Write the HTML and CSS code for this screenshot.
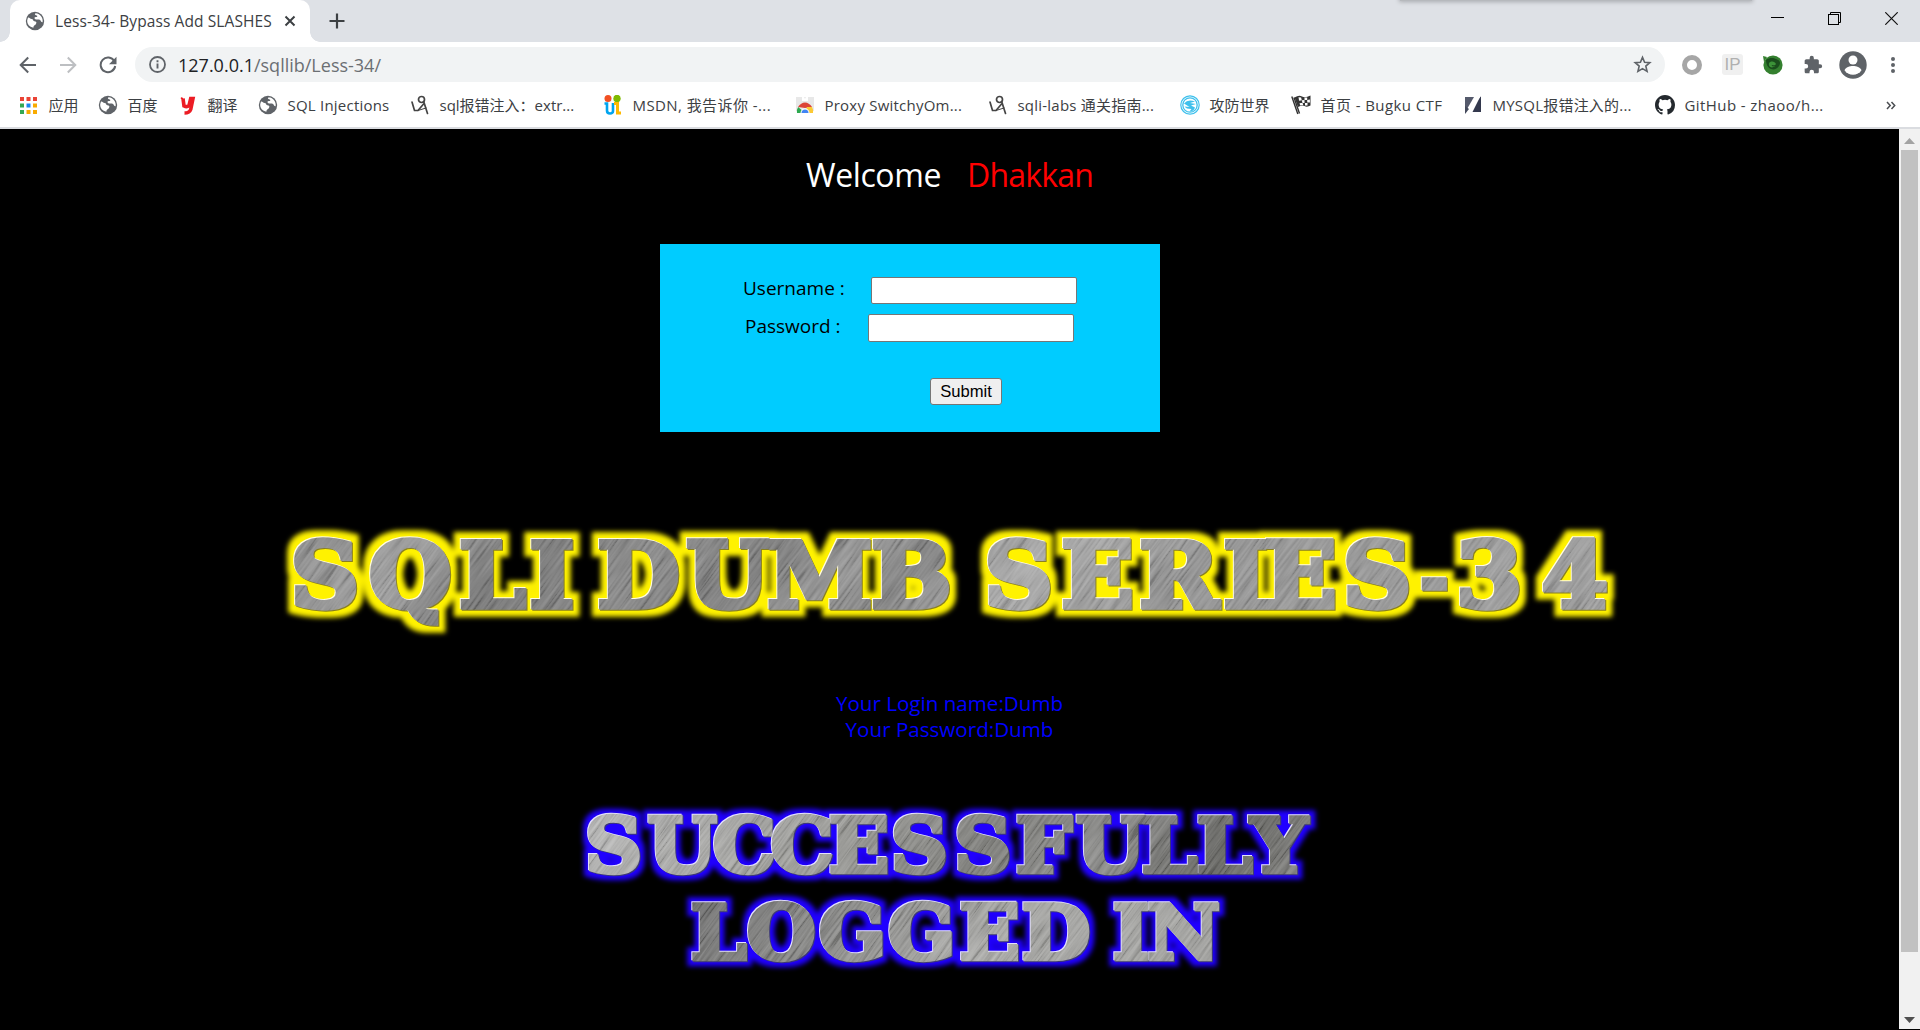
FILE: index.html
```
<!DOCTYPE html>
<html lang="zh-CN">
<head>
<meta charset="utf-8">
<title>Less-34- Bypass Add SLASHES</title>
<link rel="stylesheet" href="styles.css">
</head>
<body>
<svg class="defs" width="0" height="0" aria-hidden="true">
  <defs>
    <symbol id="globe" viewBox="0 0 20 20"><circle cx="10" cy="10" r="9.2" fill="#5f6368"/><path d="M3 6.500c1.800-.2 2 1.600 3.700 1.500 1.700 0 1 2 2.600 2.300 1.800.3 2.700 1 1.700 2.700-.8 1.300-2.500 1.200-2.600 3.700C4.500 16.300 1.900 13 2.200 9.300zM10.500 2.200c-1.500 1.400.2 2 1.400 2.300 1 .4.3 1.600-1 1.600-1.600 0-2 1.600-.6 2.100 1.700.5 3.400-.3 4.800.8 1 .8 1 2.400 2.500 2.200.8-4-2-8.600-7.100-9z" fill="#fff"/></symbol>
    <symbol id="figure" viewBox="0 0 20 20"><g fill="none" stroke="#444" stroke-width="1.700" stroke-linecap="round"><circle cx="11.500" cy="4.500" r="3"/><path d="M2 7l2.500 8.500h3.500L14 8.500M14 7.500l3.500 11"/><path d="M8 15.500l8-2.500" stroke-width="1"/></g></symbol>
  </defs>
</svg>

<header class="tabstrip">
  <div class="tab">
    <svg class="favicon" viewBox="0 0 20 20"><use href="#globe"/></svg>
    <span class="tab-title">Less-34- Bypass Add SLASHES</span>
    <svg class="tab-close" viewBox="0 0 12 12"><path d="M1.500 1.500l9 9M10.500 1.500l-9 9" stroke="#3c4043" stroke-width="2"/></svg>
  </div>
  <svg class="newtab" viewBox="0 0 16 16"><path d="M8 .5v15M.5 8h15" stroke="#3c4043" stroke-width="2.200"/></svg>
  <div class="peek"></div>
  <div class="window-controls">
    <svg width="13" height="13" viewBox="0 0 13 13"><path d="M0 5.500h13" stroke="#000"/></svg>
    <svg width="13" height="13" viewBox="0 0 13 13" fill="none" stroke="#000"><rect x=".5" y="2.500" width="10" height="10"/><path d="M2.500 2.500v-2h10v10h-2"/></svg>
    <svg width="13" height="13" viewBox="0 0 13 13"><path d="M.3.3l12.400 12.400M12.700.3L.3 12.700" stroke="#111" stroke-width="1.200"/></svg>
  </div>
</header>

<nav class="toolbar">
  <div class="nav-buttons">
    <svg width="18" height="18" viewBox="0 0 18 18"><path d="M17 9H2M9.200 1.500L1.700 9l7.500 7.500" fill="none" stroke="#5f6368" stroke-width="2"/></svg>
    <svg width="18" height="18" viewBox="0 0 18 18"><path d="M1 9h15M8.800 1.500L16.300 9l-7.500 7.500" fill="none" stroke="#bdbfc2" stroke-width="2"/></svg>
    <svg width="18" height="18" viewBox="0 0 18 18"><path d="M15.300 5.200A7.300 7.300 0 1 0 16.200 10" fill="none" stroke="#5f6368" stroke-width="2"/><path d="M17.500.7v7.500H10z" fill="#5f6368"/></svg>
  </div>
  <div class="omnibox">
    <svg width="17" height="17" viewBox="0 0 17 17"><circle cx="8.500" cy="8.500" r="7.500" fill="none" stroke="#5f6368" stroke-width="1.800"/><path d="M8.500 7.500v5M8.500 4.300v1.900" stroke="#5f6368" stroke-width="1.900"/></svg>
    <span class="url"><b>127.0.0.1</b>/sqllib/Less-34/</span>
    <svg class="star" width="19" height="19" viewBox="0 0 20 20"><path d="M10 2.500l2.200 5.100 5.500.5-4.200 3.600 1.300 5.500L10 14.300l-4.800 2.900 1.300-5.500L2.300 8.100l5.500-.5z" fill="none" stroke="#5f6368" stroke-width="1.700"/></svg>
  </div>
  <div class="extensions">
    <svg width="22" height="22" viewBox="0 0 22 22"><circle cx="11" cy="11" r="7.500" fill="none" stroke="#a6a6a6" stroke-width="5"/></svg>
    <span class="ip">IP</span>
    <svg width="20" height="20" viewBox="0 0 20 20"><circle cx="10" cy="10" r="9.600" fill="#34802f"/><path d="M3 5c4-3 8-2 10-1 4 1 5 4 3 7-2 3-5 4-8 3-3-1-5-5-5-9z" fill="#1a4d1c"/><path d="M6 8c3-3 6-1 7 1-1 2-3 1-4 1-1 1 1 2 3 1-3 3-7 1-6-3z" fill="#3c9238"/><path d="M0 1l4 1-3 5z" fill="#34802f"/></svg>
    <svg width="20" height="20" viewBox="0 0 24 24"><path d="M20.500 11H19V7c0-1.100-.9-2-2-2h-4V3.500a2.500 2.500 0 0 0-5 0V5H4c-1.100 0-2 .9-2 2v3.800h1.500a2.700 2.700 0 0 1 0 5.400H2V20c0 1.100.9 2 2 2h3.800v-1.500a2.700 2.700 0 0 1 5.400 0V22H17c1.100 0 2-.9 2-2v-4h1.500a2.500 2.500 0 0 0 0-5z" fill="#5f6368"/></svg>
    <svg width="28" height="28" viewBox="0 0 28 28"><circle cx="14" cy="14" r="13.700" fill="#5f6368"/><circle cx="14" cy="9" r="4.500" fill="#fff"/><path d="M5.500 19.200c1.500-3.200 5-4.200 8.500-4.200s7 1 8.500 4.200a10.200 10.200 0 0 1-17 0z" fill="#fff"/></svg>
    <svg width="6" height="18" viewBox="0 0 6 18" fill="#5f6368"><circle cx="3" cy="3" r="2"/><circle cx="3" cy="9" r="2"/><circle cx="3" cy="15" r="2"/></svg>
  </div>
</nav>

<nav class="bookmarks">
  <a><svg viewBox="0 0 20 20"><path fill="#ea4335" d="M1 2h4v4H1zM7.500 2h4v4h-4zM14 2h4v4h-4z"/><path fill="#34a853" d="M1 8.500h4v4H1zM1 15h4v4H1z"/><path fill="#1a86f0" d="M7.500 8.500h4v4h-4z"/><path fill="#f9ab00" d="M14 8.500h4v4h-4zM7.500 15h4v4h-4zM14 15h4v4h-4z"/></svg><span>应用</span></a>
  <a><svg viewBox="0 0 20 20"><use href="#globe"/></svg><span>百度</span></a>
  <a><svg viewBox="0 0 20 20"><path d="M5 3.500l1 7.500q3 1.500 5-.5l1.700-7H15l-2.300 11q-1.200 3.500-6.200 3.500M5 3.500l-1.500 1" fill="none" stroke="#ec1c24" stroke-width="3.600"/></svg><span>翻译</span></a>
  <a><svg viewBox="0 0 20 20"><use href="#globe"/></svg><span class="wide">SQL Injections</span></a>
  <a><svg viewBox="0 0 20 20"><use href="#figure"/></svg><span>sql报错注入：extr...</span></a>
  <a><svg viewBox="0 0 20 20"><circle cx="5" cy="3.500" r="3.500" fill="#f25022"/><circle cx="14" cy="3.500" r="3.700" fill="#7fba00"/><path d="M1.500 8.500h2.500v7q0 3 3 3t3-2.500V8" fill="none" stroke="#00a4ef" stroke-width="2.600"/><path d="M11 8.500h3.500V18H18" fill="none" stroke="#ffb900" stroke-width="3"/></svg><span class="wider">MSDN, 我告诉你 -...</span></a>
  <a><svg viewBox="0 0 20 20"><path d="M1 2h18v14H1z" fill="#e8e8e8"/><path d="M7 2h2l1 2 1-2h2v4H7z" fill="#fff"/><path d="M2 18a8 8 0 0 1 1.200-6L10 18z" fill="#2da94f"/><path d="M3 12q3-4.500 7-4.500t7 4.500l-7 1z" fill="#dc4437"/><path d="M17 12q1.500 2.500 1 6h-8l2-6z" fill="#fcc934"/><path d="M5.500 18a4.500 4.500 0 0 1 9 0z" fill="#fff"/><path d="M6.500 18a3.500 3.500 0 0 1 7 0z" fill="#4285f4"/></svg><span class="wide">Proxy SwitchyOm...</span></a>
  <a><svg viewBox="0 0 20 20"><use href="#figure"/></svg><span class="wide">sqli-labs 通关指南...</span></a>
  <a><svg viewBox="0 0 20 20"><g fill="none" stroke="#3fc0ec"><circle cx="10" cy="10" r="9.200" stroke-width="1.200"/><circle cx="10" cy="10" r="7.200" stroke-width="1.300"/></g><path d="M4 8.500Q8 3.500 15 6.500l-5 1.500 6 1-5 1.500 4 2q-1 4-5.500 4l2-2.500Q6 14 4.500 11.500l5 .5z" fill="#3fc0ec"/></svg><span>攻防世界</span></a>
  <a><svg viewBox="0 0 20 20"><path d="M.8 1.500l6 17.500M3 2.500l5.500 16" stroke="#333" stroke-width="1.400"/><path d="M3.500 2.500Q8-.5 11 1.500t8.500-1v10q-3.500 2-6 .5t-6.500 1z" fill="#333"/><path d="M7.500 2.200l2.600.4.700 2.600-2.700.5zM13.500 2.500h2.700v2.600h-2.700zM10.800 5.200l2.700-.1v3h-2zM16.200 5.100l2.700-.5v2.800h-2.700zM8.500 8.300l3-.5.7 2.300-3 .4zM14 8.100h2.500v2.300H14z" fill="#fff"/></svg><span class="wider">首页 - Bugku CTF</span></a>
  <a><svg viewBox="0 0 20 20"><path d="M2 2h9L2 17.500z" fill="#555a6c"/><path d="M18 0v17H9.500z" fill="#33384d"/><path d="M18 0L2 19" stroke="#fff" stroke-width="1.500"/><path d="M2 11v8l4-5z" fill="#444a5c"/></svg><span class="wide">MYSQL报错注入的...</span></a>
  <a><svg viewBox="0 0 16 16"><path fill="#24292e" d="M8 0C3.580 0 0 3.580 0 8c0 3.540 2.290 6.530 5.470 7.590.4.070.550-.170.550-.380 0-.190-.010-.820-.010-1.490-2.010.370-2.530-.490-2.690-.940-.090-.230-.480-.940-.820-1.130-.280-.150-.680-.520-.010-.530.630-.010 1.080.580 1.230.820.720 1.210 1.870.870 2.330.660.070-.520.280-.870.510-1.070-1.780-.200-3.640-.890-3.640-3.950 0-.870.310-1.590.820-2.150-.080-.200-.360-1.020.080-2.120 0 0 .670-.210 2.200.820a7.420 7.420 0 0 1 4 0c1.530-1.040 2.200-.820 2.200-.820.440 1.100.160 1.920.080 2.120.510.560.820 1.270.820 2.150 0 3.070-1.870 3.750-3.650 3.950.290.250.540.730.540 1.480 0 1.070-.010 1.930-.010 2.200 0 .210.150.460.550.380A8.010 8.010 0 0 0 16 8c0-4.420-3.580-8-8-8z"/></svg><span class="wider">GitHub - zhaoo/h...</span></a>
  <svg class="more" width="10" height="9" viewBox="0 0 10 9"><path d="M1 1l3.200 3.500L1 8M5.500 1l3.200 3.500L5.500 8" fill="none" stroke="#4a4d51" stroke-width="1.500"/></svg>
</nav>

<div class="viewport">
  <main class="page">
    <h1 class="welcome"><span class="hello">Welcome</span><span class="name">Dhakkan</span></h1>
    <form class="login">
      <label class="row user"><span>Username :</span><input type="text"></label>
      <label class="row pass"><span>Password :</span><input type="text"></label>
      <button type="button">Submit</button>
    </form>
    <svg class="banner title" width="1360" height="130" viewBox="270 510 1360 130">
      <defs>
        <linearGradient id="steel" x1="0" x2="1" y1="0" y2=".08">
          <stop offset="0" stop-color="#8c8c8c"/><stop offset=".07" stop-color="#8f8f8f"/><stop offset=".13" stop-color="#a0a0a0"/><stop offset=".2" stop-color="#747474"/><stop offset=".3" stop-color="#888"/><stop offset=".38" stop-color="#7c7c7c"/><stop offset=".44" stop-color="#999"/><stop offset=".48" stop-color="#808080"/><stop offset=".56" stop-color="#b0b0b0"/><stop offset=".68" stop-color="#949494"/><stop offset="1" stop-color="#a0a0a0"/>
        </linearGradient>
        <filter id="grain" x="0" y="0" width="1" height="1"><feTurbulence type="fractalNoise" baseFrequency=".02 .45" numOctaves="2" seed="4"/><feColorMatrix values="1.600 0 0 0 -.45  1.600 0 0 0 -.45  1.600 0 0 0 -.45  0 0 0 0 .2"/></filter>
        <pattern id="metal" patternUnits="userSpaceOnUse" x="255" y="510" width="1360" height="130">
          <rect width="1360" height="130" fill="url(#steel)"/>
          <g transform="rotate(-55 680 65)"><rect x="0" y="-640" width="1360" height="1400" filter="url(#grain)"/></g>
        </pattern>
        <filter id="glow-yellow" x="-5%" y="-40%" width="110%" height="180%" color-interpolation-filters="sRGB">
          <feMorphology in="SourceAlpha" operator="dilate" radius="6.500" result="fat"/><feGaussianBlur in="fat" stdDeviation="2.600" result="soft"/>
          <feFlood flood-color="#fff200"/><feComposite in2="soft" operator="in" result="glow"/>
          <feOffset in="SourceAlpha" dx="-1.200" dy="-1.200" result="up"/><feFlood flood-color="#fffbe0"/><feComposite in2="up" operator="in" result="light"/>
          <feOffset in="SourceAlpha" dx="1" dy="1" result="down"/><feFlood flood-color="#8a8020"/><feComposite in2="down" operator="in" result="dark"/>
          <feMerge><feMergeNode in="glow"/><feMergeNode in="dark"/><feMergeNode in="light"/><feMergeNode in="SourceGraphic"/></feMerge>
        </filter>
      </defs>
      <text transform="scale(1.05 1)" y="607" x="277 351.500 437.500 504.500 543.800 569 653.800 731 830 909 937.600 1011 1085.200 1165.200 1204.300 1279" filter="url(#glow-yellow)" fill="url(#metal)" stroke="url(#metal)">SQLI DUMB SERIES<tspan class="dash" x="1353.500" y="600">-</tspan><tspan x="1387 1468.500" y="607">34</tspan></text>
    </svg>
    <p class="result">Your Login name:Dumb<br>Your Password:Dumb</p>
    <svg class="banner success" width="760" height="190" viewBox="570 795 760 190">
      <defs>
        <linearGradient id="steel2" x1="0" x2="1" y1="0" y2=".1">
          <stop offset="0" stop-color="#c0c0c0"/><stop offset=".35" stop-color="#a0a09c"/><stop offset=".58" stop-color="#7c7c78"/><stop offset=".72" stop-color="#8a8a88"/><stop offset=".88" stop-color="#60605c"/><stop offset="1" stop-color="#858582"/>
        </linearGradient>
        <linearGradient id="steel3" x1="0" x2="1" y1="0" y2=".1">
          <stop offset=".15" stop-color="#686868"/><stop offset=".35" stop-color="#868684"/><stop offset=".58" stop-color="#adadaa"/><stop offset="1" stop-color="#a0a09d"/>
        </linearGradient>
        <pattern id="metal2" patternUnits="userSpaceOnUse" x="540" y="795" width="760" height="190">
          <rect width="760" height="93" fill="url(#steel2)"/><rect y="93" width="760" height="97" fill="url(#steel3)"/>
          <g transform="rotate(-55 380 95)"><rect x="-50" y="-300" width="860" height="800" filter="url(#grain)"/></g>
        </pattern>
        <filter id="glow-blue" x="-5%" y="-40%" width="110%" height="180%" color-interpolation-filters="sRGB">
          <feMorphology in="SourceAlpha" operator="dilate" radius="5" result="fat"/><feGaussianBlur in="fat" stdDeviation="2.600" result="soft"/>
          <feFlood flood-color="#2000ff"/><feComposite in2="soft" operator="in" result="glow"/>
          <feOffset in="SourceAlpha" dx="-1" dy="-1" result="up"/><feFlood flood-color="#e4e0ff"/><feComposite in2="up" operator="in" result="light"/>
          <feOffset in="SourceAlpha" dx="1" dy="1" result="down"/><feFlood flood-color="#3c3878"/><feComposite in2="down" operator="in" result="dark"/>
          <feMerge><feMergeNode in="glow"/><feMergeNode in="dark"/><feMergeNode in="light"/><feMergeNode in="SourceGraphic"/></feMerge>
        </filter>
      </defs>
      <g transform="scale(1.05 1)" filter="url(#glow-blue)" fill="url(#metal2)" stroke="url(#metal2)">
        <text y="872.500" x="557.300 617.100 679 734 789.500 848.600 909 967.700 1025 1087.500 1140 1191.500">SUCCESSFULLY</text>
        <text y="959.500" x="658 711.500 780 846 914 973.300 1038 1060 1093.300">LOGGED IN</text>
      </g>
    </svg>
  </main>
  <aside class="scrollbar">
    <svg width="11" height="6" viewBox="0 0 11 6"><path d="M0 6L5.500 0 11 6z" fill="#a3a3a3"/></svg>
    <div class="thumb"></div>
    <svg width="11" height="6" viewBox="0 0 11 6"><path d="M0 0h11L5.500 6z" fill="#505050"/></svg>
  </aside>
</div>
</body>
</html>
```
FILE: styles.css
```
* { box-sizing: border-box; }
body {
  margin: 0;
  width: 1920px;
  height: 1030px;
  overflow: hidden;
  display: flex;
  flex-direction: column;
  background: #000;
  font-family: "Open Sans", "Noto Sans CJK SC", sans-serif;
}
svg { display: block; flex: none; }
.defs { position: absolute; }

.tabstrip {
  position: relative;
  height: 42px;
  flex: none;
  display: flex;
  align-items: flex-end;
  background: #dee1e6;
  padding-left: 10px;
}
.tab {
  position: relative;
  width: 300px;
  height: 42px;
  display: flex;
  align-items: center;
  padding-left: 15px;
  background: #fff;
  border-radius: 10px 10px 0 0;
}
.tab::before, .tab::after {
  content: "";
  position: absolute;
  bottom: 0;
  width: 10px;
  height: 10px;
}
.tab::before { left: -10px; background: radial-gradient(circle at 0 0, transparent 9.5px, #fff 10px); }
.tab::after { right: -10px; background: radial-gradient(circle at 100% 0, transparent 9.5px, #fff 10px); }
.favicon { width: 20px; height: 20px; }
.tab-title { width: 229px; margin-left: 10px; font-size: 15.5px; color: #3c4043; white-space: nowrap; letter-spacing: .1px; }
.tab-close { width: 12px; height: 12px; }
.newtab { width: 16px; height: 16px; margin: 0 0 13px 19px; }
.peek {
  position: absolute;
  left: 1400px;
  top: -4px;
  width: 352px;
  height: 5px;
  background: #b6b9bd;
  box-shadow: 0 0 4px 1px #a9abaf;
}
.window-controls { display: flex; gap: 44px; margin: 0 22px 17px auto; }

.toolbar { height: 45px; flex: none; display: flex; align-items: center; background: #fff; }
.nav-buttons { display: flex; gap: 22px; width: 135px; padding-left: 19px; }
.omnibox {
  width: 1530px;
  height: 35px;
  display: flex;
  align-items: center;
  padding: 0 13px 0 14px;
  border-radius: 18px;
  background: #f1f3f4;
}
.url { margin-left: 12px; font-size: 18px; color: #6b6f73; white-space: nowrap; }
.url b { font-weight: 400; color: #202124; }
.star { margin-left: auto; }
.extensions { display: flex; align-items: center; margin-left: 16px; }
.ip {
  width: 21px;
  height: 21px;
  margin: 0 20px 0 19px;
  border-radius: 3px;
  background: #f0f0f0;
  color: #b0b0b0;
  font: 17px/21px "Liberation Sans", sans-serif;
  text-align: center;
}
.extensions svg:nth-child(4) { margin-left: 20px; }
.extensions svg:nth-child(5) { margin-left: 16px; }
.extensions svg:nth-child(6) { margin-left: 23px; }

.bookmarks {
  height: 42px;
  flex: none;
  display: grid;
  grid-template-columns: 79px 80px 80px 152px 193px 192px 193px 192px 111px 172px 192px 231px auto;
  align-items: center;
  padding: 0 0 4px 19px;
  background: #fff;
  border-bottom: 2px solid #dadce0;
}
.bookmarks a { display: flex; align-items: center; gap: 9.5px; font-size: 15px; line-height: 22px; color: #3c4043; white-space: nowrap; }
.bookmarks a svg { width: 20px; height: 20px; }
.bookmarks .wide { letter-spacing: .22px; }
.bookmarks .wider { letter-spacing: .42px; }

.viewport { height: 900px; flex: none; display: flex; }
.page { width: 1899px; background: #000; overflow: hidden; display: flex; flex-direction: column; }
.welcome { display: flex; gap: 27px; margin: 24px 0 0 806px; font-size: 32px; line-height: 44px; font-weight: 400; white-space: nowrap; }
.hello { color: #fff; width: 134px; letter-spacing: -.4px; }
.name { color: #f00; letter-spacing: -.8px; }
.login {
  width: 500px;
  height: 188px;
  flex: none;
  margin: 47px 0 0 660px;
  background: #0cf;
  display: flex;
  flex-direction: column;
  padding-top: 33px;
}
.row { display: flex; height: 28px; font-size: 19px; white-space: nowrap; }
.row input { width: 206px; height: 28px; padding: 0; border: 1px solid #767676; border-radius: 2px; background: #fff; }
.row.user input { height: 27px; }
.user { margin-left: 83px; line-height: 22px; }
.user span { width: 128px; }
.pass { margin: 9px 0 0 85px; line-height: 25px; }
.pass span { width: 123px; }
.login button {
  width: 72px;
  height: 27px;
  margin: 36px 0 0 270px;
  padding: 0;
  border: 1px solid #767676;
  border-radius: 3px;
  background: #efefef;
  color: #000;
  font: 16.6px "Liberation Sans", sans-serif;
}
.banner { font-family: "DejaVu Serif", serif; font-weight: 700; }
.title { margin: 78px 0 0 270px; font-size: 90px; stroke-width: 5.5px; }
.dash { font-size: 60px; }
.result { margin: 50px 0 0; font-size: 20.6px; line-height: 26px; text-align: center; color: #00f; }
.success { margin: 53px 0 0 570px; font-size: 75px; stroke-width: 4.5px; }

.scrollbar { width: 21px; display: flex; flex-direction: column; align-items: center; background: #f1f1f1; padding-top: 9px; }
.thumb { width: 17px; height: 802px; margin: 6px 0 65px; background: #c1c1c1; }
```
